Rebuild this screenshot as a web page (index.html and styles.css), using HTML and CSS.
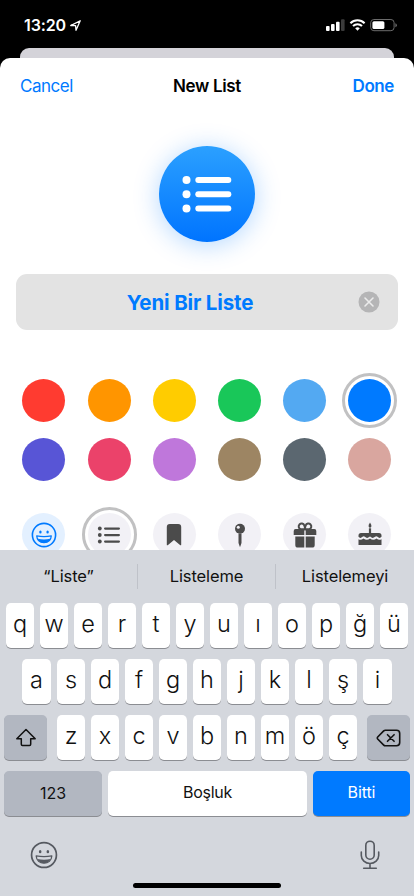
FILE: index.html
```html
<!DOCTYPE html>
<html lang="tr">
<head>
<meta charset="utf-8">
<meta name="viewport" content="width=device-width, initial-scale=1">
<title>New List</title>
<link rel="stylesheet" href="styles.css">
</head>
<body>
<div class="phone">
  <div class="status">
    <span class="time">13:20</span>
    <svg class="location" width="11" height="11" viewBox="0 0 11 11"><path d="M.7 5.500 10.200.8 6 10.300 5.600 5.600Z" fill="none" stroke="#fff" stroke-width="1.300" stroke-linejoin="round"/></svg>
    <svg class="signal" width="72" height="14" viewBox="0 0 72 14">
      <g fill="#fff"><rect x="0" y="8" width="3.6" height="5" rx="1"/><rect x="5" y="6" width="3.6" height="7" rx="1"/><rect x="10" y="3.7" width="3.6" height="9.3" rx="1"/></g>
      <rect x="15" y="1.3" width="3.6" height="11.7" rx="1" fill="#3b3b3b"/>
      <g fill="none" stroke="#fff" stroke-width="2"><path d="M24.4 5.2a10 10 0 0 1 14.2 0"/><path d="M27 8a6.4 6.4 0 0 1 9 0"/></g>
      <path d="M29.2 10.3a3.4 3.4 0 0 1 4.6 0L31.500 12.700Z" fill="#fff"/>
      <rect x="44.700" y="1.500" width="23.400" height="11.200" rx="3.200" fill="none" stroke="#6b6b6b"/>
      <rect x="46.400" y="3.200" width="12" height="7.800" rx="1.600" fill="#fff"/>
      <path d="M69.400 5.200v4q1.500-.6 1.500-2t-1.500-2Z" fill="#6b6b6b"/>
    </svg>
  </div>
  <div class="back-sheet"></div>
  <main class="sheet">
    <header class="nav">
      <span class="cancel">Cancel</span>
      <span class="title">New List</span>
      <span class="done">Done</span>
    </header>
    <div class="badge">
      <svg width="52" height="40" viewBox="0 0 52 40"><g fill="#fff"><circle cx="5.500" cy="6" r="4"/><circle cx="5.500" cy="20.200" r="4"/><circle cx="5.500" cy="34.500" r="4"/><rect x="14.300" y="3" width="36" height="6" rx="3"/><rect x="14.300" y="17.200" width="36" height="6" rx="3"/><rect x="14.300" y="31.500" width="36" height="6" rx="3"/></g></svg>
    </div>
    <div class="field">
      <span class="name">Yeni Bir Liste</span>
      <svg class="clear" width="22" height="22" viewBox="0 0 22 22"><circle cx="11" cy="11" r="10.500" fill="#b5b5b6"/><path d="m7 7 8 8m0-8-8 8" stroke="#ececec" stroke-width="1.600" stroke-linecap="round"/></svg>
    </div>
    <div class="grid">
      <i class="dot red"></i><i class="dot orange"></i><i class="dot yellow"></i><i class="dot green"></i><i class="dot sky"></i><i class="dot blue selected"></i>
      <i class="dot indigo"></i><i class="dot pink"></i><i class="dot purple"></i><i class="dot brown"></i><i class="dot slate"></i><i class="dot rose"></i>
    </div>
    <div class="grid icons">
      <div class="dot emoji"><svg width="28" height="28" viewBox="0 0 28 28"><use href="#smile"/></svg></div>
      <div class="dot selected"><svg width="28" height="28" viewBox="0 0 28 28"><g fill="#4b4b4b"><circle cx="4.800" cy="7.500" r="1.900"/><circle cx="4.800" cy="14" r="1.900"/><circle cx="4.800" cy="20.500" r="1.900"/><rect x="9" y="6.400" width="16" height="2.300" rx="1.100"/><rect x="9" y="12.900" width="16" height="2.300" rx="1.100"/><rect x="9" y="19.400" width="16" height="2.300" rx="1.100"/></g></svg></div>
      <div class="dot"><svg width="28" height="28" viewBox="0 0 28 28"><path d="M6.800 6q0-3 3-3h8.400q3 0 3 3v17.400q0 1.500-1.200.5L14 19l-6 4.900q-1.200 1-1.200-.5Z" fill="#4b4b4b"/></svg></div>
      <div class="dot"><svg width="28" height="28" viewBox="0 0 28 28"><circle cx="14" cy="7.700" r="5" fill="#4b4b4b"/><circle cx="12.300" cy="6.200" r="1.500" fill="#f2f1f6"/><path d="M12.500 12.500h3V22L14 26.200 12.500 22Z" fill="#4b4b4b"/></svg></div>
      <div class="dot"><svg width="28" height="28" viewBox="0 0 28 28"><g fill="none" stroke="#4b4b4b" stroke-width="2"><path d="M14 8.200H9.700a2.900 2.900 0 1 1 3.600-3.800Q14 6 14 8.200Z"/><path d="M14 8.200h4.300a2.900 2.900 0 1 0-3.600-3.800Q14 6 14 8.200Z"/></g><path d="M4.600 8h8.700v6H2.700V9.900Q2.700 8 4.600 8ZM14.700 8h8.700q1.900 0 1.900 1.900V14H14.700ZM4.300 15.400h9v11.200H7q-2.700 0-2.700-2.700ZM14.700 15.400h9v8.500q0 2.700-2.700 2.700h-6.300Z" fill="#4b4b4b"/></svg></div>
      <div class="dot"><svg width="28" height="28" viewBox="0 0 28 28"><g fill="#4b4b4b"><path d="M14 1.500q2 2.800 1.300 4.300-.5 1-1.300 1t-1.300-1Q12 4.300 14 1.500Z"/><rect x="12.900" y="7.300" width="2.200" height="5.500"/><path d="M5 12h18q2.500 0 2.500 2.500v1.300q-1.800 2.300-4 0-1.200-1-2.400 0-2.600 2.300-4.600 0-.5-.5-1 0-2.500 2.300-4.600 0-1.200-1-2.400 0-2.200 2.300-4 0v-1.300Q2.500 12 5 12Z"/><path d="M2.500 18.300q2.500 1.300 5-.8 3.200 2.500 6.500 0 3.300 2.500 6.500 0 2.500 2.100 5 .8V24H2.500Z"/></g></svg></div>
    </div>
  </main>
  <section class="keyboard">
    <div class="suggestions"><span>“Liste”</span><span>Listeleme</span><span>Listelemeyi</span></div>
    <div class="row first"><b>q</b><b>w</b><b>e</b><b>r</b><b>t</b><b>y</b><b>u</b><b>ı</b><b>o</b><b>p</b><b>ğ</b><b>ü</b></div>
    <div class="row second"><b>a</b><b>s</b><b>d</b><b>f</b><b>g</b><b>h</b><b>j</b><b>k</b><b>l</b><b>ş</b><b>i</b></div>
    <div class="row third">
      <b class="mod shift"><svg width="24" height="22" viewBox="0 0 24 22"><path d="M12 2.500 2.800 11.800h4.500v5.400q0 1.200 1.200 1.200h7q1.200 0 1.200-1.200v-5.400h4.500Z" fill="none" stroke="#111" stroke-width="1.500" stroke-linejoin="round"/></svg></b>
      <b>z</b><b>x</b><b>c</b><b>v</b><b>b</b><b>n</b><b>m</b><b>ö</b><b>ç</b>
      <b class="mod delete"><svg width="26" height="22" viewBox="0 0 26 22"><path d="M9.300 3.200h11.200q3.200 0 3.200 3.200v9.200q0 3.200-3.200 3.200H9.300q-.9 0-1.600-.7L1.700 12q-.8-1 0-2l6-6.100q.7-.7 1.600-.7Z" fill="none" stroke="#111" stroke-width="1.600"/><path d="m11.500 7.700 6.600 6.600m0-6.600-6.600 6.600" stroke="#111" stroke-width="1.600" stroke-linecap="round"/></svg></b>
    </div>
    <div class="row fourth"><b class="mod num">123</b><b class="space">Boşluk</b><b class="return">Bitti</b></div>
    <div class="tools">
      <svg class="smile" width="30" height="30" viewBox="0 0 28 28"><g id="smile"><circle cx="14" cy="14" r="11.600" fill="none" stroke="currentColor" stroke-width="1.600"/><ellipse cx="10.400" cy="10.900" rx="1.200" ry="1.500" fill="currentColor"/><ellipse cx="17.600" cy="10.900" rx="1.200" ry="1.500" fill="currentColor"/><path d="M6.700 14.900q7.300 1.300 14.600 0c-.3 4.200-3.300 6.700-7.300 6.700s-7-2.500-7.300-6.700Z" fill="none" stroke="currentColor" stroke-width="1.200" stroke-linejoin="round"/><path d="M7.700 17.700q6.300 1.500 12.600 0c-1 2.500-3.300 3.900-6.300 3.900s-5.300-1.400-6.300-3.900Z" fill="currentColor"/></g></svg>
      <svg class="mic" width="22" height="30" viewBox="0 0 22 30"><g fill="none" stroke="#555960" stroke-width="1.600" stroke-linecap="round"><rect x="6.800" y="1.200" width="8.400" height="18" rx="4.200"/><path d="M2.300 12v3.500a8.700 8 0 0 0 17.400 0V12M11 23.500V28M4.700 28.300h12.600"/></g></svg>
    </div>
    <div class="home"></div>
  </section>
</div>
</body>
</html>
```
FILE: styles.css
```css
* { box-sizing: border-box; }
body { margin: 0; background: #000; font-family: Inter, "Liberation Sans", sans-serif; }
svg { display: block; flex: none; }
.phone { width: 414px; height: 896px; overflow: hidden; display: flex; flex-direction: column; background: #000; }
.status { height: 48px; flex: none; display: flex; align-items: center; padding: 2px 16px 0 24px; color: #fff; }
.time { font-size: 16px; font-weight: 600; letter-spacing: -0.1px; }
.location { margin-left: 4px; }
.signal { margin-left: auto; }
.back-sheet { height: 10px; flex: none; margin: 0 20px; border-radius: 9px 9px 0 0; background: #d4d3d9; }
.sheet { height: 492px; flex: none; background: #fff; border-radius: 10px 10px 0 0; overflow: hidden; }
.nav { height: 56px; display: grid; grid-template-columns: 1fr auto 1fr; align-items: center; padding: 0 20px; font-size: 17px; color: #007aff; }
.cancel { letter-spacing: -0.5px; }
.title { font-weight: 600; color: #000; letter-spacing: -0.35px; }
.done { font-weight: 600; text-align: right; letter-spacing: -0.4px; }
.badge { width: 96px; height: 96px; margin: 32px auto 0; border-radius: 50%; background: linear-gradient(#2ba0ff, #0074ff); box-shadow: 0 3px 26px #007aff4d; display: flex; align-items: center; justify-content: center; }
.field { height: 56px; margin: 32px 16px 0; border-radius: 11px; background: #e3e3e3; display: flex; align-items: center; padding: 0 18px 0 6px; }
.name { flex: 1; text-align: center; font-size: 20.500px; font-weight: 700; color: #007aff; letter-spacing: -0.15px; }
.grid { display: grid; grid-template-columns: repeat(6, 43px); justify-content: space-between; row-gap: 16px; margin: 49px 22.500px 0 22.300px; }
.icons { margin-top: 32px; }
.dot { height: 43px; border-radius: 50%; background: #f2f1f6; display: flex; align-items: center; justify-content: center; }
.selected { outline: 3px solid #c1c1c2; outline-offset: 3.500px; }
.emoji { background: #e3f0ff; color: #007aff; }
.red { background: #ff3b30; } .orange { background: #ff9500; } .yellow { background: #ffcc00; }
.green { background: #19c759; } .sky { background: #53a9f2; } .blue { background: #007aff; }
.indigo { background: #5855d6; } .pink { background: #eb426a; } .purple { background: #bf77db; }
.brown { background: #9d8563; } .slate { background: #5b6770; } .rose { background: #d9a69f; }
.keyboard { height: 346px; flex: none; background: #d4d7dd; color: #111; }
.suggestions { height: 53px; display: grid; grid-template-columns: repeat(3, 1fr); align-items: center; }
.suggestions span { height: 25px; line-height: 25px; text-align: center; font-size: 16.500px; letter-spacing: -0.1px; border-right: 1px solid #bfc2c9; }
.suggestions span:last-child { border-right: 0; }
.row { display: flex; gap: 6px; height: 45px; margin-bottom: 11px; padding: 0 6px; }
.row b { width: 28px; height: 45px; border-radius: 5px; background: #fff; box-shadow: 0 1px 0 #8b8d92; font-weight: 350; font-size: 23.500px; line-height: 42px; text-align: center; }
.second { padding: 0 22px; }
.second b:first-child, .second b:last-child { width: 29px; }
.third { padding: 0 4px; }
.fourth { padding: 0 4px; }
.row .mod { background: #b2b7c1; display: flex; align-items: center; justify-content: center; }
.row .shift { width: 43px; margin-right: 4px; }
.row .delete { width: 43px; margin-left: 4px; }
.row .num { width: 98px; font-size: 16px; font-weight: 400; line-height: 43px; }
.row .space { width: 199px; font-size: 16px; font-weight: 400; line-height: 43px; letter-spacing: -0.3px; }
.row .return { width: 97px; font-size: 16px; font-weight: 400; line-height: 43px; background: #007aff; color: #fff; letter-spacing: -0.1px; }
.tools { height: 56px; display: flex; align-items: center; justify-content: space-between; padding: 0 33px 0 29px; color: #555960; }
.home { width: 148px; height: 5px; margin: 0 auto; border-radius: 3px; background: #000; }
```
